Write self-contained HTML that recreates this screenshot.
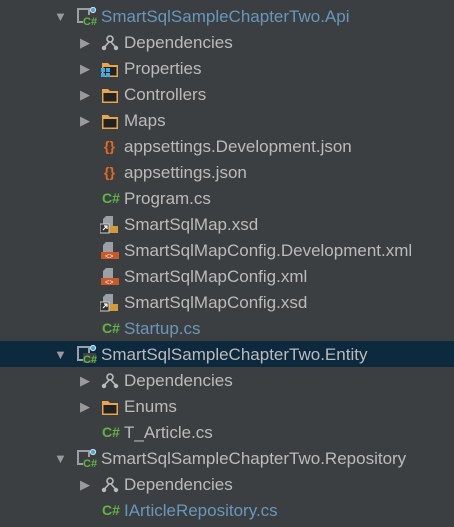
<!DOCTYPE html>
<html><head><style>
body{margin:0;background:#3c3f41;width:454px;height:527px;overflow:hidden;font-family:"Liberation Sans",sans-serif;font-size:17px;color:#bbbbbb}
.r{position:absolute;left:0;width:454px;height:26px;line-height:27px;white-space:nowrap}
.sel{background:#0d293e}
.a{position:absolute;top:0;font-size:13px;color:#9a9a9a}
.t{position:absolute;top:0}
.b{color:#6897bb}
.ic{position:absolute;top:5px}
.cs{position:absolute;top:0;font-weight:bold;color:#62b543;font-size:14px}
</style></head><body>
<svg width="0" height="0" style="position:absolute">
<defs>
<g id="proj"><rect x="1" y="2" width="11" height="13" fill="none" stroke="#9aa0a6" stroke-width="2"/><rect x="6" y="8" width="13" height="10" fill="#3c3f41"/><text x="6" y="18" font-family="Liberation Sans" font-weight="bold" font-size="11" fill="#62b543">C#</text><circle cx="16" cy="3" r="2.6" fill="#40a9e8" stroke="#ddd" stroke-width="1"/></g>
<g id="dep"><circle cx="9" cy="5" r="3" fill="none" stroke="#bbb" stroke-width="1.6"/><path d="M8 8 L3.5 13 M10 8 L14.5 13" stroke="#bbb" stroke-width="1.6"/><circle cx="3" cy="14" r="2.2" fill="#bbb"/><circle cx="15" cy="14" r="2.2" fill="#bbb"/></g>
<g id="fold"><path d="M1 3 h6 l2 2 h8 v12 h-16z" fill="#e8a54a"/><rect x="2.5" y="7" width="13" height="8.5" fill="#222"/></g>
<g id="props"><path d="M1 3 h6 l2 2 h8 v12 h-16z" fill="#e8a54a"/><rect x="2.5" y="7" width="13" height="8.5" fill="#222"/><rect x="0" y="8" width="4" height="4" fill="#40a9e8"/><rect x="5" y="8" width="4" height="4" fill="#40a9e8"/><rect x="0" y="13" width="4" height="4" fill="#40a9e8"/><rect x="5" y="13" width="4" height="4" fill="#40a9e8"/></g>
<g id="xsd"><path d="M6 1 h7 v16 h-10 v-13z" fill="#9aa0a6"/><rect x="5" y="11" width="13" height="7" fill="#d49a3a"/><rect x="0" y="9" width="9" height="9" fill="#333" stroke="#ccc" stroke-width="1"/><path d="M3 15 L7 11 M4 11 h3 v3" stroke="#fff" stroke-width="1.2" fill="none"/></g>
<g id="xml"><path d="M6 1 h7 v16 h-10 v-13z" fill="#9aa0a6"/><rect x="1" y="11" width="18" height="7" fill="#c75a28"/><text x="5" y="17.5" font-size="7" fill="#fff" font-family="Liberation Mono">&lt;&gt;</text></g>
</defs></svg>

<div class="r" style="top:3px"><span class="a" style="left:54px">▼</span><svg class="ic" style="left:77px;top:4px" width="20" height="20"><use href="#proj"/></svg><span class="t b" style="left:101px">SmartSqlSampleChapterTwo.Api</span></div>
<div class="r" style="top:29px"><span class="a" style="left:80px">▶</span><svg class="ic" style="left:101px" width="19" height="18"><use href="#dep"/></svg><span class="t" style="left:124px">Dependencies</span></div>
<div class="r" style="top:55px"><span class="a" style="left:80px">▶</span><svg class="ic" style="left:101px" width="19" height="18"><use href="#props"/></svg><span class="t" style="left:124px">Properties</span></div>
<div class="r" style="top:81px"><span class="a" style="left:80px">▶</span><svg class="ic" style="left:101px" width="19" height="18"><use href="#fold"/></svg><span class="t" style="left:124px">Controllers</span></div>
<div class="r" style="top:107px"><span class="a" style="left:80px">▶</span><svg class="ic" style="left:101px" width="19" height="18"><use href="#fold"/></svg><span class="t" style="left:124px">Maps</span></div>
<div class="r" style="top:133px"><span class="t" style="left:104px;color:#e86a1e;font-weight:bold;font-size:14px">{}</span><span class="t" style="left:124px">appsettings.Development.json</span></div>
<div class="r" style="top:159px"><span class="t" style="left:104px;color:#e86a1e;font-weight:bold;font-size:14px">{}</span><span class="t" style="left:124px">appsettings.json</span></div>
<div class="r" style="top:185px"><span class="cs" style="left:102px">C#</span><span class="t" style="left:124px">Program.cs</span></div>
<div class="r" style="top:211px"><svg class="ic" style="left:100px;top:4px" width="20" height="19"><use href="#xsd"/></svg><span class="t" style="left:124px">SmartSqlMap.xsd</span></div>
<div class="r" style="top:237px"><svg class="ic" style="left:100px;top:4px" width="20" height="19"><use href="#xml"/></svg><span class="t" style="left:124px">SmartSqlMapConfig.Development.xml</span></div>
<div class="r" style="top:263px"><svg class="ic" style="left:100px;top:4px" width="20" height="19"><use href="#xml"/></svg><span class="t" style="left:124px">SmartSqlMapConfig.xml</span></div>
<div class="r" style="top:289px"><svg class="ic" style="left:100px;top:4px" width="20" height="19"><use href="#xsd"/></svg><span class="t" style="left:124px">SmartSqlMapConfig.xsd</span></div>
<div class="r" style="top:315px"><span class="cs" style="left:102px">C#</span><span class="t b" style="left:124px">Startup.cs</span></div>
<div class="r sel" style="top:341px"><span class="a" style="left:54px">▼</span><svg class="ic" style="left:77px;top:4px" width="20" height="20"><use href="#proj"/></svg><span class="t" style="left:101px">SmartSqlSampleChapterTwo.Entity</span></div>
<div class="r" style="top:367px"><span class="a" style="left:80px">▶</span><svg class="ic" style="left:101px" width="19" height="18"><use href="#dep"/></svg><span class="t" style="left:124px">Dependencies</span></div>
<div class="r" style="top:393px"><span class="a" style="left:80px">▶</span><svg class="ic" style="left:101px" width="19" height="18"><use href="#fold"/></svg><span class="t" style="left:124px">Enums</span></div>
<div class="r" style="top:419px"><span class="cs" style="left:102px">C#</span><span class="t" style="left:124px">T_Article.cs</span></div>
<div class="r" style="top:445px"><span class="a" style="left:54px">▼</span><svg class="ic" style="left:77px;top:4px" width="20" height="20"><use href="#proj"/></svg><span class="t" style="left:101px">SmartSqlSampleChapterTwo.Repository</span></div>
<div class="r" style="top:471px"><span class="a" style="left:80px">▶</span><svg class="ic" style="left:101px" width="19" height="18"><use href="#dep"/></svg><span class="t" style="left:124px">Dependencies</span></div>
<div class="r" style="top:497px"><span class="cs" style="left:102px">C#</span><span class="t b" style="left:124px">IArticleRepository.cs</span></div>
</body></html>
